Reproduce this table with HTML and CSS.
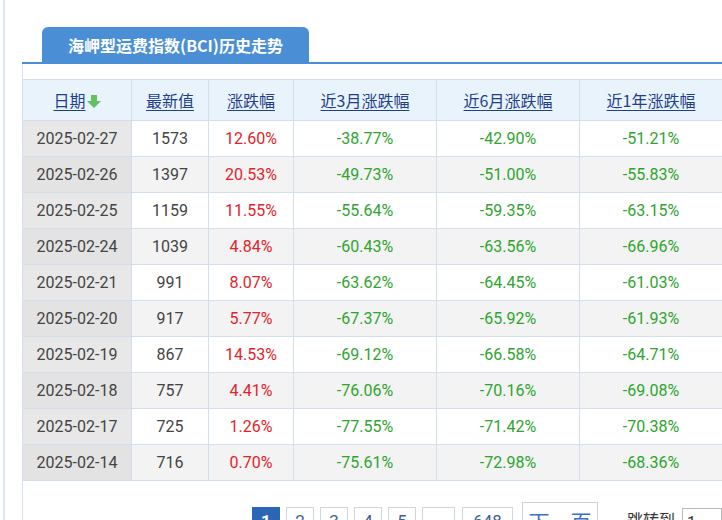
FILE: index.html
```html
<!DOCTYPE html>
<html lang="zh">
<head>
<meta charset="utf-8">
<title>海岬型运费指数(BCI)历史走势</title>
<link rel="stylesheet" href="styles.css">
</head>
<body>
<div class="page">
  <div class="tabbar">
    <div class="tab">海岬型运费指数(BCI)历史走势</div>
  </div>
  <div class="panel">
    <table class="grid">
      <colgroup>
        <col class="c-date"><col class="c-val"><col class="c-chg"><col class="c-m3"><col class="c-m6"><col class="c-y1">
      </colgroup>
      <thead>
        <tr>
          <th><a href="#">日期</a><svg class="sort" width="14" height="13" viewBox="0 0 14 13"><path d="M4 0h6v6h4L7 13 0 6h4z" fill="#62c162"/></svg></th>
          <th><a href="#">最新值</a></th>
          <th><a href="#">涨跌幅</a></th>
          <th><a href="#">近3月涨跌幅</a></th>
          <th><a href="#">近6月涨跌幅</a></th>
          <th><a href="#">近1年涨跌幅</a></th>
        </tr>
      </thead>
      <tbody>
        <tr><td class="d">2025-02-27</td><td>1573</td><td class="up">12.60%</td><td class="dn">-38.77%</td><td class="dn">-42.90%</td><td class="dn">-51.21%</td></tr>
        <tr><td class="d">2025-02-26</td><td>1397</td><td class="up">20.53%</td><td class="dn">-49.73%</td><td class="dn">-51.00%</td><td class="dn">-55.83%</td></tr>
        <tr><td class="d">2025-02-25</td><td>1159</td><td class="up">11.55%</td><td class="dn">-55.64%</td><td class="dn">-59.35%</td><td class="dn">-63.15%</td></tr>
        <tr><td class="d">2025-02-24</td><td>1039</td><td class="up">4.84%</td><td class="dn">-60.43%</td><td class="dn">-63.56%</td><td class="dn">-66.96%</td></tr>
        <tr><td class="d">2025-02-21</td><td>991</td><td class="up">8.07%</td><td class="dn">-63.62%</td><td class="dn">-64.45%</td><td class="dn">-61.03%</td></tr>
        <tr><td class="d">2025-02-20</td><td>917</td><td class="up">5.77%</td><td class="dn">-67.37%</td><td class="dn">-65.92%</td><td class="dn">-61.93%</td></tr>
        <tr><td class="d">2025-02-19</td><td>867</td><td class="up">14.53%</td><td class="dn">-69.12%</td><td class="dn">-66.58%</td><td class="dn">-64.71%</td></tr>
        <tr><td class="d">2025-02-18</td><td>757</td><td class="up">4.41%</td><td class="dn">-76.06%</td><td class="dn">-70.16%</td><td class="dn">-69.08%</td></tr>
        <tr><td class="d">2025-02-17</td><td>725</td><td class="up">1.26%</td><td class="dn">-77.55%</td><td class="dn">-71.42%</td><td class="dn">-70.38%</td></tr>
        <tr><td class="d">2025-02-14</td><td>716</td><td class="up">0.70%</td><td class="dn">-75.61%</td><td class="dn">-72.98%</td><td class="dn">-68.36%</td></tr>
      </tbody>
    </table>
    <div class="pager">
      <span class="pg on">1</span>
      <a class="pg" href="#">2</a>
      <a class="pg" href="#">3</a>
      <a class="pg" href="#">4</a>
      <a class="pg" href="#">5</a>
      <span class="pg dots">...</span>
      <a class="pg wide" href="#">648</a>
      <a class="pg next" href="#">下一页</a>
      <span class="jump">跳转到</span>
      <input class="jin" type="text" value="1">
    </div>
  </div>
</div>
</body>
</html>
```

FILE: styles.css
```css
html, body {
  margin: 0;
  padding: 0;
  overflow: hidden;
  background: #fff;
}
body {
  font-family: Roboto, "Noto Sans CJK SC", sans-serif;
  color: #333;
}
.page {
  margin-left: 3px;
  border-left: 2px solid #dde5ee;
  padding-left: 17px;
  min-height: 520px;
  width: 800px;
}
.tabbar {
  padding-top: 27px;
  padding-left: 20px;
  border-bottom: 2px solid #4a8fd6;
  display: flex;
}
.tab {
  width: 267px;
  height: 35px;
  background: #4a8fd6;
  border-radius: 6px 6px 0 0;
  color: #fff;
  font-family: "Noto Sans CJK SC", sans-serif;
  font-weight: bold;
  font-size: 16px;
  display: flex;
  align-items: center;
  justify-content: center;
}
.panel {
  border-left: 1px solid #d6e1ec;
  padding-top: 15px;
  min-height: 460px;
}
.grid {
  border-collapse: collapse;
  table-layout: fixed;
  width: 700px;
  margin-left: -1px;
  font-size: 16px;
}
.c-date { width: 109px; }
.c-val { width: 77px; }
.c-chg { width: 85px; }
.c-m3 { width: 143px; }
.c-m6 { width: 143px; }
.c-y1 { width: 143px; }
.grid th, .grid td {
  border: 1px solid #d3dfec;
  text-align: center;
  padding: 0;
  white-space: nowrap;
}
.grid th {
  height: 40px;
  background: #e9f3fc;
  font-weight: normal;
  font-family: "Noto Sans CJK SC", sans-serif;
}
.grid th a {
  color: #1f3f8a;
  text-decoration: underline;
  text-underline-offset: 3px;
}
.sort {
  vertical-align: -1px;
  margin-left: 1px;
}
.grid td {
  height: 35px;
  color: #444;
  background: #fff;
}
.grid tbody tr:nth-child(even) td {
  background: #f3f3f3;
}
.grid td.d {
  background: #e8e8e8;
}
.grid tbody tr:nth-child(even) td.d {
  background: #e3e3e3;
}
.grid td.up { color: #e2232c; }
.grid td.dn { color: #2ea52e; }
.pager {
  display: flex;
  align-items: flex-start;
  padding-left: 229px;
  padding-top: 26px;
  font-size: 17px;
}
.pg {
  box-sizing: border-box;
  flex: none;
  width: 28px;
  height: 28px;
  border: 1px solid #cfd6de;
  margin-right: 6px;
  color: #3d5f99;
  text-decoration: none;
  display: flex;
  align-items: center;
  justify-content: center;
  font-family: Roboto, sans-serif;
}
.pg.on {
  background: #2b66b6;
  border-color: #2b66b6;
  color: #fff;
  font-weight: bold;
}
.pg.dots {
  width: 33px;
  color: #999;
}
.pg.wide {
  width: 51px;
  margin-left: 1px;
}
.pg.next {
  width: 76px;
  height: 38px;
  margin-top: -5px;
  margin-left: 3px;
  font-family: "Noto Sans CJK SC", sans-serif;
  font-size: 21px;
  color: #3c71c4;
  border-color: #cdd3da;
}
.jump {
  flex: none;
  margin-left: 23px;
  margin-top: 0;
  font-family: "Noto Sans CJK SC", sans-serif;
  font-size: 16px;
  color: #333;
}
.jin {
  flex: none;
  box-sizing: border-box;
  margin-left: 7px;
  margin-top: 1px;
  width: 40px;
  height: 28px;
  border: 1px solid #bbb;
  padding: 0 4px;
  font-family: Roboto, sans-serif;
  font-size: 16px;
  color: #333;
}
```
